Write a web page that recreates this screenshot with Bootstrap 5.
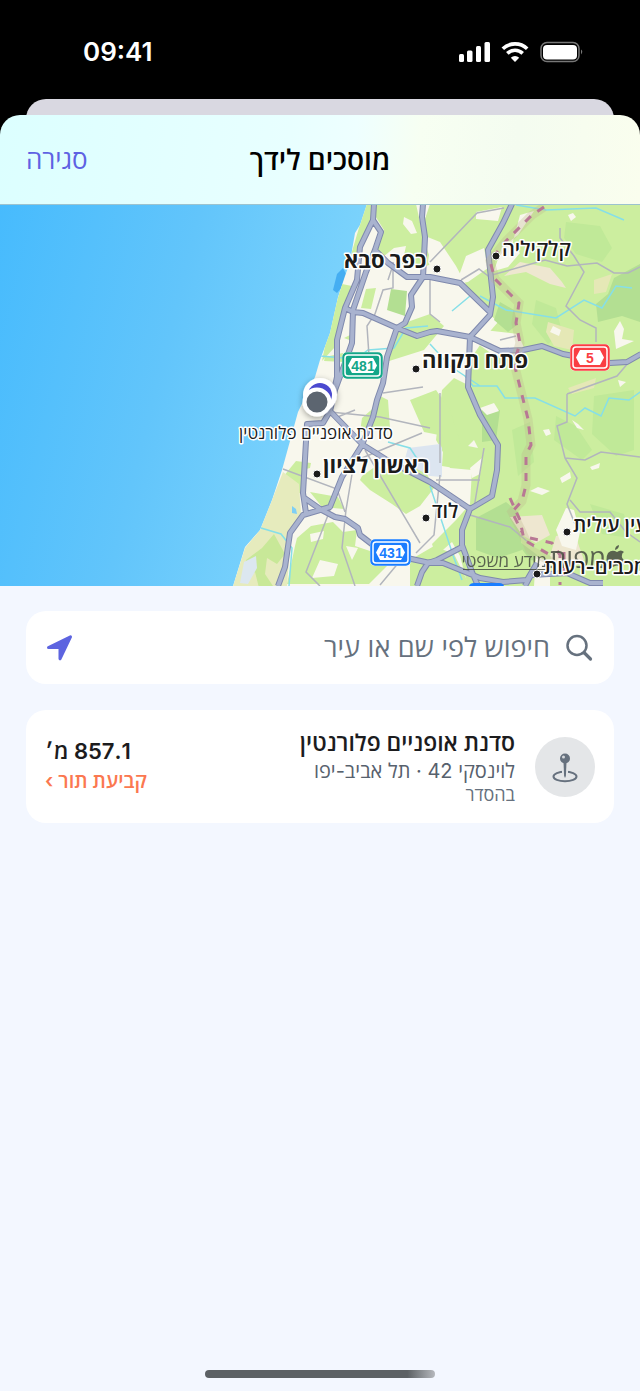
<!DOCTYPE html>
<html lang="he" dir="rtl">
<head>
    <meta charset="UTF-8">
    <meta name="viewport" content="width=device-width, initial-scale=1.0">
    <title>מוסכים לידך</title>
    <link href="https://cdn.jsdelivr.net/npm/bootstrap@5.3.0/dist/css/bootstrap.min.css" rel="stylesheet">
    <style>
        body {
            font-family: Inter, "Open Sans", "Liberation Sans", sans-serif;
            background: #f3f7ff;
            color: #1c1c1e;
        }
        .phone-top { background: #000; }
        .status-bar { height: 99px; padding: 4px 57px 0 83px; }
        .clock { font-size: 26px; line-height: 32px; font-weight: 600; color: #fff; }
        .back-sheet { height: 36px; margin: 0 26px -20px; background: #d9d8e1; border-radius: 20px 20px 0 0; }
        .sheet-head {
            display: grid;
            grid-template-columns: 1fr auto 1fr;
            height: 89px;
            padding: 0 26px;
            border-radius: 20px 20px 0 0;
            background: linear-gradient(97deg, #dcffff 0%, #e8ffff 45%, #eeffff 55%, #f7fff2 65%, #f4fcf0 80%, #fafeee 100%);
        }
        .sheet-head h1 { font-size: 28px; line-height: 32px; font-weight: 600; color: #000; }
        .close-btn { font-size: 26px; line-height: 32px; color: #5e62e3; text-decoration: none; }
        .map-box { border-top: 1px solid #9cc3cf; }
        .map-box svg { width: 100%; height: auto; }
        .city { font-weight: 700; font-size: 22px; }
        .town { font-weight: 600; font-size: 20px; }
        .map-text text { fill: #1b1b1b; stroke: #fff; stroke-width: 3px; stroke-linejoin: round; paint-order: stroke; }
        .road-edge { stroke: #7f89ad; stroke-width: 6px; }
        .road-fill { stroke: #a9b3cf; stroke-width: 4px; }
        .shield-no { font: 700 14px "Liberation Sans Narrow", "Liberation Sans", sans-serif; }
        .list-wrap { padding: 25px 26px; gap: 26px; }
        .panel { background: #fff; border-radius: 20px; }
        .search-panel { height: 73px; padding: 0 20px; gap: 14px; }
        .search-panel input { font-size: 27px; line-height: 32px; color: #66717e; min-width: 0; }
        .search-panel input::placeholder { color: #66717e; opacity: 1; }
        .shop { padding: 18px 19px; min-height: 113px; gap: 20px; }
        .shop-icon { width: 60px; height: 60px; background: #e4e6e8; }
        .shop-name { font-size: 23px; line-height: 28px; font-weight: 600; }
        .shop-distance { font-size: 22px; line-height: 28px; font-weight: 600; }
        .shop-address { font-size: 20px; line-height: 28px; color: #57616d; }
        .shop-note { font-size: 18px; line-height: 20px; font-weight: 500; color: #66717e; }
        .shop-book { font-size: 20px; line-height: 32px; font-weight: 600; color: #fb7850; text-decoration: none; }
        .home-bar { width: 230px; height: 8px; margin-bottom: 13px; background: linear-gradient(90deg, #5c6165 88%, #b5b8bd); }
    </style>
</head>
<body>
<div class="min-vh-100 d-flex flex-column">
    <header class="phone-top">
        <div class="status-bar d-flex align-items-center justify-content-between" dir="ltr">
            <span class="clock">09:41</span>
            <svg width="125" height="24" viewBox="458 40 125 24" aria-hidden="true">
                <g fill="#fff">
                    <rect x="459" y="54" width="5" height="8" rx="1.5"/>
                    <rect x="467" y="50.500" width="5.500" height="11.500" rx="1.500"/>
                    <rect x="476" y="46" width="5" height="16" rx="1.500"/>
                    <rect x="484.500" y="42" width="5.500" height="20" rx="1.500"/>
                </g>
                <g fill="none" stroke="#fff" stroke-width="3.600">
                    <path d="M502.800 48.800a17.500 17.500 0 0 1 24.400 0"/>
                    <path d="M507.300 53.400a11 11 0 0 1 15.400 0"/>
                </g>
                <path fill="#fff" d="M515 62l-4.200-4.200a6 6 0 0 1 8.400 0z"/>
                <rect x="541" y="42.500" width="38" height="19" rx="6" fill="none" stroke="#777" stroke-width="1.500"/>
                <rect x="543" y="45" width="34" height="14.500" rx="4" fill="#fff"/>
                <path fill="#777" d="M581 49.500q2.500 2 0 5z"/>
            </svg>
        </div>
        <div class="back-sheet"></div>
        <div class="sheet-head align-items-center position-relative">
            <span></span>
            <h1 class="m-0">מוסכים לידך</h1>
            <a href="#" class="close-btn text-start" dir="ltr">סגירה</a>
        </div>
    </header>

    <div class="map-box">
        <svg class="d-block" viewBox="0 205 640 381" direction="ltr" role="img" aria-label="מפה">
            <defs>
                <linearGradient id="sea" x1="0" y1="0" x2="1" y2=".25">
                    <stop offset="0" stop-color="#47bbfd"/>
                    <stop offset=".5" stop-color="#62c5fb"/>
                    <stop offset=".9" stop-color="#7ad2fc"/>
                </linearGradient>
                <path id="land" d="M367 204L360 225 355 233 350 262 345 276 338 297 330 333 320 360 315 377 298 412 282 470 272 500 260 530 245 547 233 586H640V204z"/>
                <path id="roads" d="M374 204L373 220 360 247 357 280 345 308 337 340 337 377 333 395M373 220L381 232 375 250 366 272 353 310 352 343 345 363 335 390 330 411M375 250L388 263 407 277 430 277 460 283 490 312M423 204L422 217 425 237 423 277 411 295 412 307 405 323 397 328 387 357 383 383 377 400 373 417 362 445 342 477 330 507 303 515 290 533 285 567 278 586M345 308L353 312 363 313 397 328 417 336 430 332 437 331 470 337 500 351 523 350 542 346 563 354 610 363 627 362 641 354M512 204L503 223 488 250 493 297 490 315 470 337 468 387 480 415 498 445 497 470 492 496 470 509 462 530 462 545 472 572 478 586M328 409L363 445 387 460 430 482 470 509M330 411L323 423 307 424 303 493 306 513M303 497L320 509 335 517 345 519 358 528 360 535 373 545 407 558 430 563 443 563 480 578 503 582 527 580 537 563M525 586L531 575 567 573 590 583 603 583M417 586L422 572 428 563 437 560 462 547"/>
                <clipPath id="coast"><use href="#land"/></clipPath>
                <filter id="pinShadow" x="-50%" y="-50%" width="200%" height="200%">
                    <feDropShadow dx="0" dy="2" stdDeviation="3" flood-opacity=".35"/>
                </filter>
            </defs>
            <rect y="204" width="380" height="382" fill="url(#sea)"/>
            <path fill="#45aef2" d="M343 268l-6 6-4 16 4 3 6-7 4-10z"/>
            <use href="#land" fill="#f8f7ed"/>
            <g clip-path="url(#coast)">
                <!-- open green land -->
                <g fill="#ccee9f">
                    <path d="M366 204h50l8 36 8 24-12 4-18-4 4-18-12 2-10 8-14-2 14-24-10-16-14 40-10 4z"/>
                    <path d="M430 204h210v382H468l-8-30-8-14-16 14-4-12 24-24 14-16 2-34-22-2-6-14-8-14 6-50 12-12 16 8-4-20 20-30 12-14-24-22-18-34-16-24-20-8z"/>
                    <path d="M342 284l10 2-16 60-14 15 6-30z"/>
                    <path d="M366 289l10-1-5 21-10-1zM396 326l34-12 14 12-20 24-38 12 10-22zM362 418l16-14-2-10 12 6 2 28-30 4zM344 338l10-5-2 8zM325 357l18-4 1 9-20-1z"/>
                    <path d="M362 476l14-10 22 4 26-2 10 20-14 18-14 8-14-10-22-14-10-10z"/>
                    <path d="M297 538l14-12 22-4 10 10 14-2-2 16 24 8 8 12-18 18h-82l8-38zM410 400l26-10 14 20 12 38-8 20-12-2 2-30-20-4z"/>
                    <path d="M296 461l15 2-1 5-8 2 4 9-4 15-14-5-5-12zM310 492l28 5 6 12-22-2z"/>
                    <path d="M410 560l24-14 20 8 16 32h-60z"/>
                </g>
                <!-- dunes by the shore -->
                <path fill="#e6ebbd" d="M283 472l16 12 2 30-10 18-4 54h-54l12-38 15-18 12-30z"/>
                <path fill="#c8e898" d="M246 560l16-12 12-14 11 20-8 10-10-6-2 16 8 12-14 2-4-16-12 10z"/>
                <path fill="#dce7f0" d="M244 562l12-6 1 12-9 16-8-1z"/>
                <!-- hills -->
                <g fill="#c0e998">
                    <path d="M566 222l34 4 12 22-10 14-26-8-12-16zM536 300l20 8 6 24-14 12-16-20zM556 416l20 10 16 24-10 10-28-20zM594 396l40-6v60l-18 6-24-22zM590 504l34 10 6 24-28-4zM512 430l18-8 4 40-16 14z"/>
                </g>
                <!-- woods -->
                <g fill="#b3df92">
                    <path d="M391 289l16 2-2 25-18-6zM482 408l18 2-4 30-14 2zM476 518l30-16 12 10 4 38-24 8-22-8zM500 302l14 8 4 14-10 8-14-12zM614 278l26-14v58l-18-6-24 6-2-18 12-10zM512 536l24 18 8 8-14-2z"/>
                </g>
                <g fill="#e5e8b6">
                    <path d="M548 322l26 8-2 20-18-4-8-14zM568 388l28-10-2 10-22 6zM594 280l18-6-6 18-12 2z"/>
                </g>
                <g fill="#eee7d0">
                    <path d="M504 276l16-14 30 6 12 14 4 6-16-4-24-12zM510 517l32-2 8 20-14 8-14-8zM556 536l18-4 10 28-24 16-10-20z"/>
                </g>
                <!-- built-up patches -->
                <g fill="#f8f7ed">
                    <path d="M404 217l8 4 5 12-6 1-8-10zM476 212l26-5-4 14-22-2zM520 215l14-4-16 24-16 12-8 24 14-4 12-14-8-8zM430 248l14 6 4 18-14 2-6-12zM466 256l18-8 4 20-20 14-12 2zM484 330l34 4 8 18-20 6-14-4-14-10zM553 326l8 4-2 6-9-4zM568 215l5-2 3 4-5 4zM620 321l4 8-2 10 12 2-18 8-2-18z"/>
                    <path d="M480 408l14-5 5 8-12 4zM543 430l6-1 2 5-5 2zM572 420l6 4 6 6-7-2zM560 478l10-6 1 6-9 5zM530 491l8-4 12 4-8 4zM590 467l10-4-1 5-7 2zM566 508l8 2 6 22-4 18-14-4-6-16zM468 446l6-6 4 8zM470 468l12-10-2 16-8 4zM618 380l8 2-6 5zM440 516l8 6-8 12-6-8zM536 556l14 6v24h-16z"/>
                    <path d="M310 534l14-3-1 8-12 3zM346 546l12 2-6 12zM320 560l18 4-4 12-22 2z"/>
                </g>
                <path fill="#dce5f0" d="M408 448l32-4 2 4v29l-12-1-26-14z"/>
                <path fill="#7ecff5" d="M292 506l4 3 1 5-5-1z"/>
                <!-- streams -->
                <g fill="none" stroke="#86dfe8" stroke-width="1.500">
                    <path d="M516 205l30 5 50-2 28 12M470 296l-18 15M480 296l26 14 50 8 28-18 18 8 14-22 16 2M320 356l36 3 12-9 26-2 12-20 22-2M465 376l8 10 24 0 8 12 30 0 40 18 10-8 16 8 8-18 20 2 14-10M261 528l20 6 11 14-3 38M388 442l22 6 8 12M430 486l16 48 8 24 8 22M430 344l20 22 30 20"/>
                </g>
                <!-- minor roads -->
                <g fill="none" stroke="#b2b5bd" stroke-width="1.500">
                    <path d="M492 275l53-15 22 6 30-3 17 10h14l12-6M430 262l47-49 27-5M461 280l18-11 13 10M560 228v10l14 18 10 16-18 34 14 14 16 8v14M393 262v26l-10 2-8 24-8 12 2 30M430 280v34l10 8M383 393l40-6M392 268l-4 12M283 469l54 20 8 23M365 450l55 93M356 450l-10 60-4 38 13 38M330 510l-24 62 14 14M330 412l50 5 50 11M362 458l60-25M440 475l-6 60-18 18M480 480h-44M484 448l-10 60M440 393v70M567 394v28l-10 4 8 32M565 458l20 2 16-8 39 5M565 458l12 20-10 26 8 20M570 500l10 12 30 0 16 20 14 10M470 515l40 12 24 20M355 410l-20 8M380 585l20-24M500 340l16-4M567 394l50-18 12-14"/>
                </g>
                <!-- highways, edge then fill -->
                <g fill="none" stroke-linejoin="round">
                    <use class="road-edge" href="#roads"/>
                    <use class="road-fill" href="#roads"/>
                </g>
                <!-- border line -->
                <path fill="none" stroke="#bdb58a" stroke-width="9" opacity=".3" d="M544 207l-12 8-26 26-16 20 5 18 24 24-3 20 4 20-6 20 8 32 6 24 3 26-5 10v30l-4 16-10 11 10 20 8 18 22 12"/>
                <path fill="none" stroke="#b87894" stroke-width="3" stroke-dasharray="8 8" d="M544 207l-12 8-26 26-16 20 5 18 24 24-3 20 4 20-6 20 8 32 6 24 3 26-5 10v30l-4 16-10 11 10 20M510 498l10 22 4 20 28 16M530 538l22 5 8 12v30M564 552v30"/>
            </g>

            <!-- road numbers -->
            <g fill="#fff">
                <rect x="342" y="352" width="41" height="27" rx="5"/>
                <rect x="370" y="539" width="41" height="27" rx="5"/>
                <rect x="570" y="344" width="40" height="27" rx="5"/>
            </g>
            <g stroke="#fff" stroke-width="1.500">
                <rect x="343" y="353" width="39" height="25" rx="4" fill="#13a688" stroke="#13a688"/>
                <rect x="345" y="355" width="35" height="21" rx="3" fill="#13a688"/>
                <rect x="371" y="540" width="39" height="25" rx="4" fill="#1a7dff" stroke="#1a7dff"/>
                <rect x="373" y="542" width="35" height="21" rx="3" fill="#1a7dff"/>
                <rect x="571" y="345" width="38" height="25" rx="4" fill="#fa3e42" stroke="#fa3e42"/>
                <rect x="573" y="347" width="34" height="21" rx="3" fill="#fa3e42"/>
            </g>
            <path fill="#fff" d="M352 358h21l4 7.500-4 7.500h-21l-4-7.500zM380 545h21l4 7.500-4 7.500h-21l-4-7.500zM580 350h20l4 7.500-4 7.500h-20l-4-7.500z"/>
            <g class="shield-no" text-anchor="middle">
                <text x="363" y="371" fill="#13a688">481</text>
                <text x="391" y="558" fill="#1a7dff">431</text>
                <text x="590" y="363" fill="#fa3e42">5</text>
            </g>
            <path fill="#1a7dff" d="M469 586q1-3 5-3h25q4 0 5 3z"/>

            <!-- map credit -->
            <g fill="#454b40" opacity=".85">
                <text x="547" y="567" font-size="17" text-anchor="end">מידע משפטי</text>
                <path d="M463 569h84v1h-84z"/>
                <text x="606" y="568" font-size="27" text-anchor="end">מפות</text>
                <path d="M617 552q-5-3-9 1-4 7 2 13 2 2 5 0 2-1 4 0 3 1 4-1 2-3 2-4-4-3-3-6 0-2 2-3-3-3-7 0zM615 550q0-4 4-5 0 4-4 5z"/>
            </g>

            <g fill="#1b1b1b" stroke="#fff" stroke-width="1">
                <circle cx="437" cy="269" r="4"/>
                <circle cx="496" cy="256" r="4"/>
                <circle cx="416" cy="369" r="4"/>
                <circle cx="317" cy="474" r="4"/>
                <circle cx="426" cy="518" r="4"/>
                <circle cx="567" cy="532" r="4"/>
                <circle cx="537" cy="574" r="4"/>
            </g>
            <g class="map-text">
                <text class="city" x="344" y="268">כפר סבא</text>
                <text class="city" x="422" y="368">פתח תקווה</text>
                <text class="city" x="323" y="473">ראשון לציון</text>
                <text class="town" x="502" y="256">קלקיליה</text>
                <text class="town" x="432" y="518">לוד</text>
                <text class="town" x="573" y="532">עין עילית</text>
                <text class="town" x="544" y="574">מכבים-רעות</text>
                <text x="316" y="439" font-size="17" font-weight="500" text-anchor="middle">סדנת אופניים פלורנטין</text>
            </g>

            <!-- shop pins -->
            <g filter="url(#pinShadow)">
                <circle cx="320" cy="395" r="17" fill="#fff"/>
                <circle cx="320" cy="395" r="12" fill="#4b4ad0"/>
                <circle cx="317" cy="402" r="12.500" fill="#5b6570" stroke="#fff" stroke-width="4"/>
            </g>
        </svg>
    </div>

    <main class="d-flex flex-column flex-grow-1">
        <div class="list-wrap d-flex flex-column">
            <div class="panel search-panel d-flex align-items-center">
                <svg width="30" height="30" viewBox="564 633 30 30" fill="none" stroke="#66717e" stroke-width="2.500" stroke-linecap="round" aria-hidden="true">
                    <circle cx="577" cy="645.500" r="9.500"/>
                    <path stroke-width="3.200" d="M584.500 653l6 6"/>
                </svg>
                <input type="search" class="flex-grow-1 border-0 bg-transparent p-0" placeholder="חיפוש לפי שם או עיר" aria-label="חיפוש לפי שם או עיר">
                <button type="button" class="btn p-0 border-0 d-flex" aria-label="המיקום שלי">
                    <svg width="28" height="28" viewBox="46 634 28 28" aria-hidden="true">
                        <path fill="#5d64e0" stroke="#5d64e0" stroke-width="3" stroke-linejoin="round" d="M70.500 636.800L60 658.800V647.500H48.500z"/>
                    </svg>
                </button>
            </div>
            <article class="panel shop d-flex align-items-center">
                <span class="shop-icon rounded-circle d-flex flex-shrink-0 align-items-center justify-content-center">
                    <svg width="28" height="32" viewBox="551 751 28 32" aria-hidden="true">
                        <ellipse cx="565" cy="776.500" rx="11.500" ry="4.800" fill="none" stroke="#66717e" stroke-width="2"/>
                        <path fill="#e4e6e8" d="M562 770h6v4h-6z"/>
                        <path fill="#66717e" d="M563.500 762h3l-.6 14-.9 2-.9-2z"/>
                        <circle cx="565" cy="758.500" r="5" fill="#66717e"/>
                        <circle cx="563.500" cy="757" r="1.500" fill="#d5d8dc"/>
                    </svg>
                </span>
                <div class="flex-grow-1">
                    <h2 class="shop-name m-0">סדנת אופניים פלורנטין</h2>
                    <div class="shop-address">לוינסקי 42 · תל אביב-יפו</div>
                    <div class="shop-note">בהסדר</div>
                </div>
                <div class="d-flex flex-column align-items-end">
                    <span class="shop-distance">857.1 מ׳</span>
                    <a href="#" class="shop-book">קביעת תור ›</a>
                </div>
            </article>
        </div>
        <div class="home-bar rounded-pill mx-auto mt-auto"></div>
    </main>
</div>
<script src="https://cdn.jsdelivr.net/npm/bootstrap@5.3.0/dist/js/bootstrap.bundle.min.js"></script>
</body>
</html>
